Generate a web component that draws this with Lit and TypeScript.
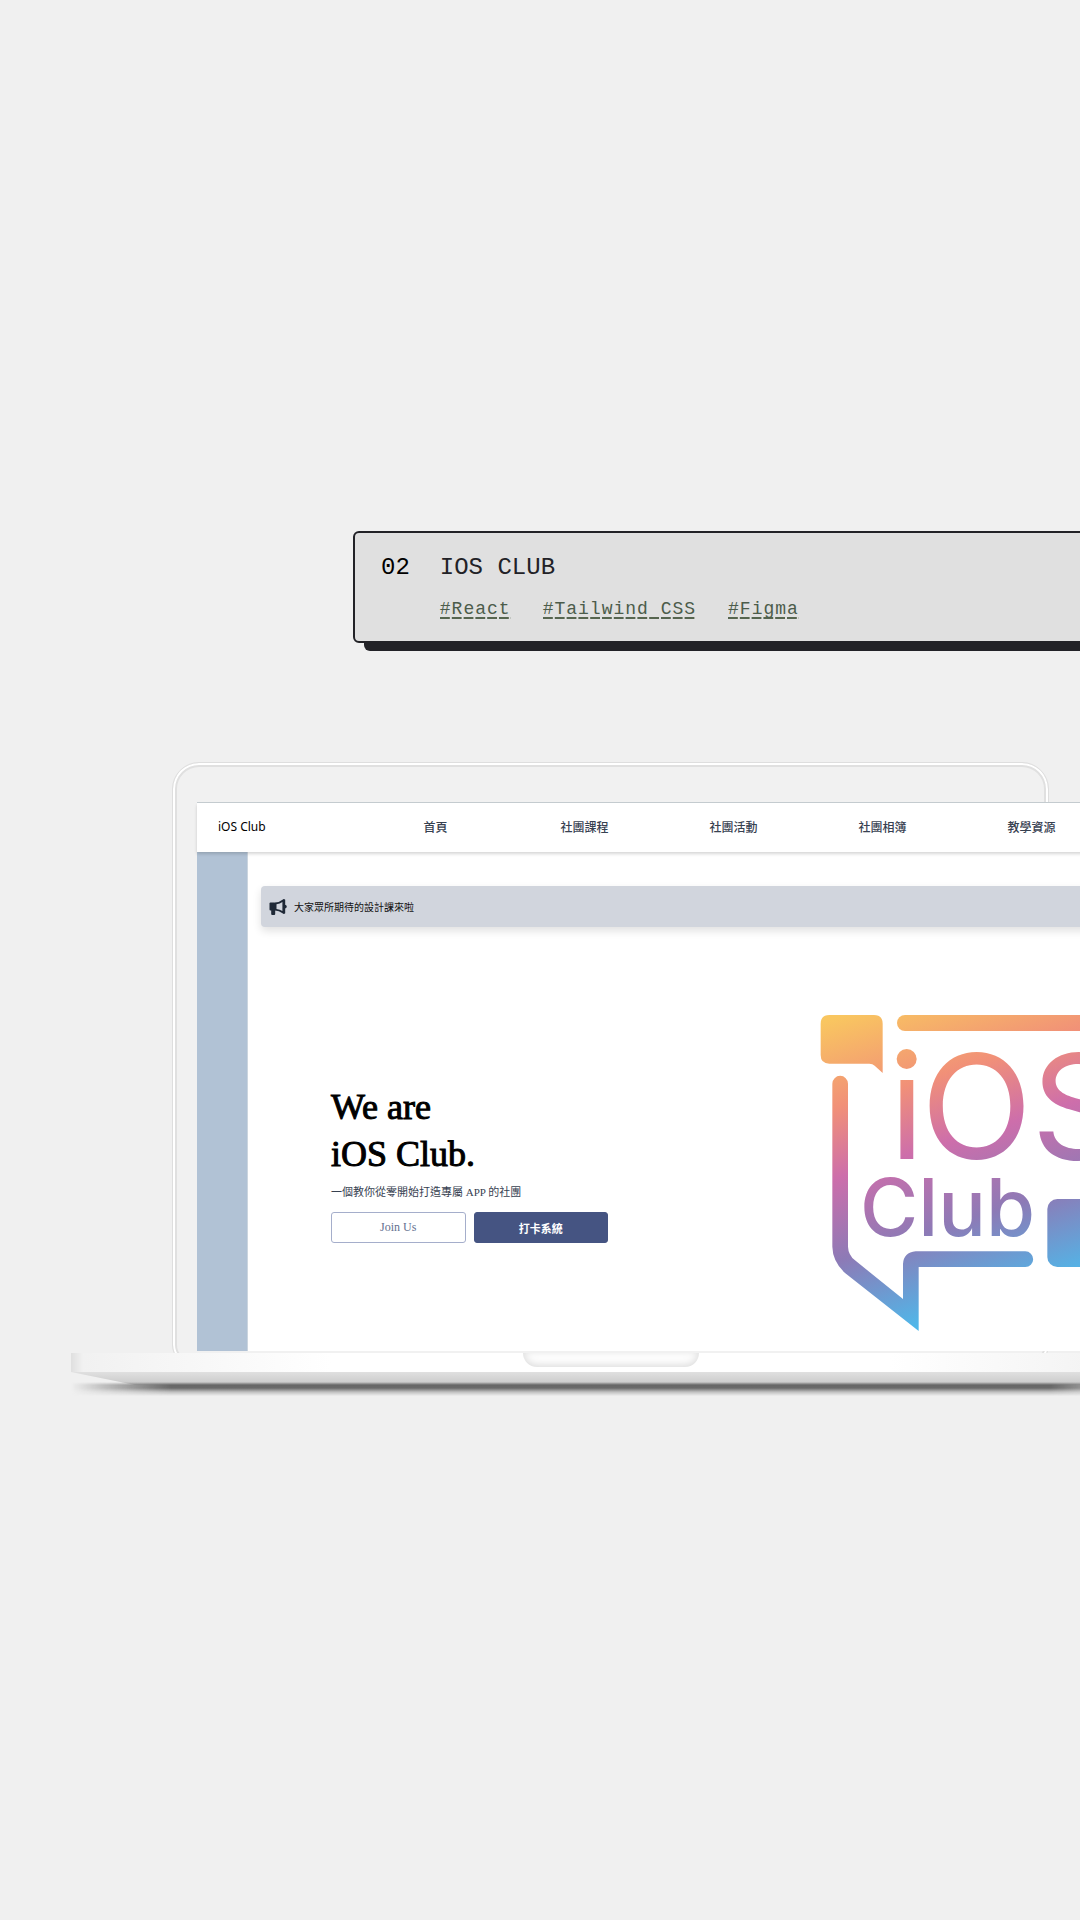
import { LitElement, html, css, svg } from "lit";
import { customElement } from "lit/decorators.js";

@customElement("project-card")
class ProjectCard extends LitElement {
  static styles = css`
    :host { display: block; }
    .card {
      box-sizing: border-box;
      display: grid;
      grid-template-columns: auto 1fr;
      column-gap: 30px;
      row-gap: 14px;
      padding: 19px 26px 16px;
      border: 2px solid #222227;
      border-radius: 6px;
      background: #e0e0e0;
      box-shadow: 11px 8px 0 #222227;
      font-family: "Liberation Mono", monospace;
    }
    .number, .title { margin: 0; font-size: 24px; line-height: 32px; font-weight: 400; color: #000; }
    .title { color: #222227; }
    .tags { grid-column: 2; display: flex; gap: 32px; margin: 0; padding: 0; list-style: none; }
    .tag {
      display: block;
      font-size: 18px;
      line-height: 22px;
      letter-spacing: 1px;
      padding-bottom: 5px;
      color: #4c5c4b;
      background: linear-gradient(90deg, #56654f 80%, transparent 80%) 0 19px / calc(1ch + 1px) 2px repeat-x;
    }
  `;
  render() {
    return html`<article class="card">
      <span class="number">02</span>
      <h2 class="title">IOS CLUB</h2>
      <ul class="tags">
        ${["#React", "#Tailwind CSS", "#Figma"].map((t) => html`<li class="tag">${t}</li>`)}
      </ul>
    </article>`;
  }
}

@customElement("club-logo")
class ClubLogo extends LitElement {
  static styles = css`
    :host { display: block; }
    .logo { display: block; width: 300px; height: 340px; }
    .word { font-family: Inter, "Liberation Sans", sans-serif; }
    .big { font-size: 436px; font-weight: 400; }
    .small { font-size: 238px; font-weight: 500; }
  `;
  render() {
    return html`<svg class="logo" viewBox="54 60 900 1020" role="img" aria-label="iOS Club">
      <defs>
        <linearGradient id="g" gradientUnits="userSpaceOnUse" x1="70" y1="95" x2="360" y2="1005">
          <stop offset="0" stop-color="#f9c660" />
          <stop offset="0.27" stop-color="#f19078" />
          <stop offset="0.48" stop-color="#cd6eab" />
          <stop offset="0.73" stop-color="#8d7ab6" />
          <stop offset="1" stop-color="#50b7e9" />
        </linearGradient>
      </defs>
      ${svg`<g fill="url(#g)">
        <path d="M88 75H222Q248 75 248 101V249L224 227Q218 221 208 221H88Q62 221 62 195V101Q62 75 88 75Z" />
        <path d="M315 75H960V123H315A24 24 0 0 1 315 75Z" />
        <path d="M97 281A23.500 23.500 0 0 1 144 281V770Q145 795 165 811L309 927V822Q311 787 347 784H676A23.500 23.500 0 0 1 676 831H356V1023L136 850Q98 815 97 770Z" />
        <rect x="742" y="627" width="260" height="204" rx="30" />
        <circle cx="320" cy="207" r="30" />
        <text class="word big" x="268 363 694" y="507">iOS</text>
        <text class="word small" x="180" y="739">Club</text>
      </g>`}
    </svg>`;
  }
}

@customElement("club-site")
class ClubSite extends LitElement {
  static styles = css`
    :host { display: block; background: #fff; border-top: 1px solid #c6cdd1; font-family: "Noto Sans", "Noto Sans CJK TC", sans-serif; }
    .bar {
      position: relative;
      box-sizing: border-box;
      display: flex;
      align-items: center;
      height: 49px;
      padding: 0 0 2px 21px;
      background: #fff;
      box-shadow: 0 2px 3px rgba(0, 0, 0, 0.16);
    }
    .brand { flex: 0 0 143px; font-size: 12px; color: #000; text-decoration: none; }
    .links { display: flex; }
    .link { flex: 0 0 149px; text-align: center; font-size: 12px; font-weight: 500; color: #374151; text-decoration: none; font-family: "Noto Sans CJK TC", sans-serif; }
    .body { display: flex; height: 499px; }
    .side { flex: 0 0 50px; background: #b1c2d5; border-right: 1px solid #cbd5df; }
    .content { flex: 1; min-width: 0; padding: 34px 0 0 13px; font-family: "Liberation Serif", "Noto Sans CJK TC", serif; }
    .notice {
      display: flex;
      align-items: center;
      gap: 7px;
      height: 41px;
      margin: 0;
      padding-left: 8px;
      border-radius: 4px;
      background: #d1d5dd;
      box-shadow: 0 4px 8px rgba(0, 0, 0, 0.12);
      font-size: 10px;
      color: #111;
    }
    .horn { width: 18px; height: 16px; fill: #1f2937; }
    .hero { display: flex; justify-content: space-between; padding: 83px 85px 0 70px; }
    .copy { padding-top: 74px; width: 277px; }
    .headline { margin: 0; font-size: 36px; line-height: 47px; font-weight: 400; color: #000; -webkit-text-stroke: 1px #000; }
    .lead { margin: 6px 0 0; font-size: 11px; line-height: 16px; color: #374151; }
    .actions { display: grid; grid-template-columns: 1fr 1fr; gap: 8px; margin-top: 12px; }
    .button { height: 31px; padding: 0; border: 1px solid #a5aecb; border-radius: 3px; background: #fff; color: #64708f; font-family: inherit; font-size: 12px; }
    .solid { border-color: #455482; background: #455482; color: #fff; font-size: 11px; font-weight: 700; }
  `;
  render() {
    return html`
      <header class="bar">
        <a class="brand" href="#home">iOS Club</a>
        <nav class="links">
          ${["首頁", "社團課程", "社團活動", "社團相簿", "教學資源"].map((t) => html`<a class="link" href="#">${t}</a>`)}
        </nav>
      </header>
      <div class="body">
        <div class="side"></div>
        <div class="content">
          <p class="notice">
            <svg class="horn" viewBox="0 0 18 16" aria-hidden="true">
              <rect x="0.500" y="3.500" width="6" height="8" rx="1" />
              <rect x="2.200" y="10" width="4" height="6" rx="1" />
              <path fill-rule="evenodd" d="M6 3.500Q10 3.500 13.500 .7Q15 -.5 16.200 .8V5.800Q17.800 6.200 17.800 7.600T16.200 9.400V14.200Q15 15.600 13.500 14.300Q10 11.500 6 11.500ZM7.500 5.200V9.900Q11 10.200 13.400 12V3.100Q11 4.900 7.500 5.200Z" />
            </svg>
            <span>大家眾所期待的設計課來啦</span>
          </p>
          <div class="hero">
            <div class="copy">
              <h1 class="headline">We are<br />iOS Club.</h1>
              <p class="lead">一個教你從零開始打造專屬 APP 的社團</p>
              <div class="actions">
                <button class="button" type="button">Join Us</button>
                <button class="button solid" type="button">打卡系統</button>
              </div>
            </div>
            <club-logo></club-logo>
          </div>
        </div>
      </div>
    `;
  }
}

@customElement("laptop-frame")
class LaptopFrame extends LitElement {
  static styles = css`
    :host { display: block; }
    .lid {
      margin: 0 31px -12px 172px;
      box-sizing: border-box;
      border: 1px solid #dedede;
      border-radius: 27px 27px 20px 20px;
      padding: 39px 0 13px 24px;
      background: #f1f1f1;
      box-shadow: inset 0 0 0 2px #fff, inset 0 0 0 4px #e0e0e0;
    }
    .screen { margin-right: -155px; }
    .base { margin: 0 -70px 0 71px; }
    .deck {
      position: relative;
      display: flex;
      justify-content: center;
      height: 19px;
      background: linear-gradient(90deg, #dfdfdf, #f1f1f1 12px, #fff 260px, #fff calc(100% - 260px), #f1f1f1 calc(100% - 12px), #dfdfdf);
    }
    .notch {
      width: 176px;
      height: 14px;
      border-radius: 0 0 14px 14px;
      background: #fff;
      box-shadow: inset 0 -2px 8px #dadada;
    }
    .under {
      position: relative;
      height: 13px;
      background: linear-gradient(#e0e0e0, #c8c8c8);
      clip-path: polygon(0 0, 100% 0, calc(100% - 64px) 100%, 64px 100%);
    }
    .shadow {
      height: 14px;
      margin-top: -3px;
      background: linear-gradient(transparent, #666 3px, #6a6a6a 6px, rgba(120, 120, 120, 0.4) 10px, transparent);
      mask-image: linear-gradient(90deg, transparent, rgba(0, 0, 0, 0.35) 32px, #000 100px, #000 calc(100% - 100px), transparent);
    }
  `;
  render() {
    return html`
      <div class="lid"><div class="screen"><slot></slot></div></div>
      <div class="base">
        <div class="deck"><div class="notch"></div></div>
        <div class="under"></div>
        <div class="shadow"></div>
      </div>
    `;
  }
}

@customElement("app-root")
class AppRoot extends LitElement {
  static styles = css`
    :host { display: block; min-height: 100vh; background: #f0f0f0; overflow: hidden; }
    .page { display: flex; flex-direction: column; gap: 119px; padding: 531px 0 120px; }
    .card { margin: 0 -60px 0 353px; }
  `;
  render() {
    return html`<main class="page">
      <project-card class="card"></project-card>
      <laptop-frame><club-site></club-site></laptop-frame>
    </main>`;
  }
}
